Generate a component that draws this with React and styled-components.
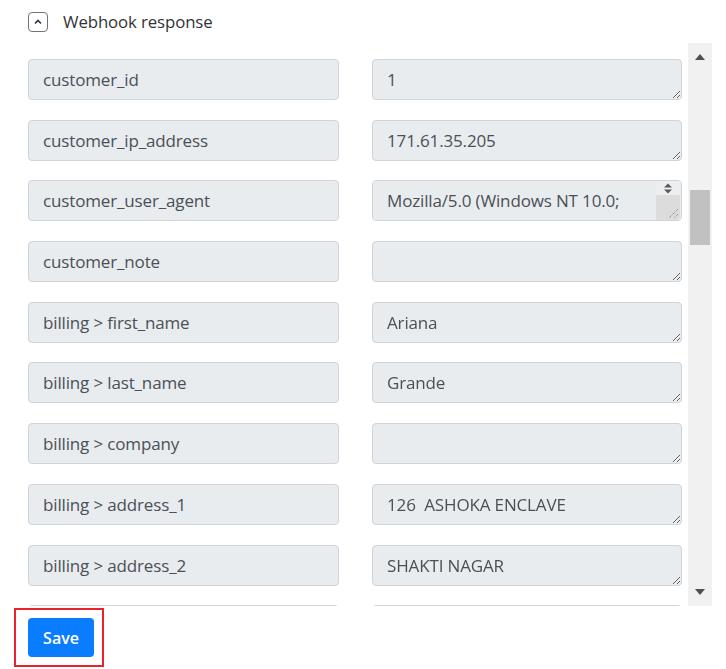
import React from 'react'
import styled, { createGlobalStyle } from 'styled-components'

const GlobalStyle = createGlobalStyle`
  html, body {
    margin: 0;
    padding: 0;
    background: #fff;
    font-family: "Open Sans", "Noto Sans", sans-serif;
  }
`

const Page = styled.div`
  width: 726px;
  height: 669px;
  display: flex;
  flex-direction: column;
  overflow: hidden;
`

const Header = styled.div`
  height: 43px;
  display: flex;
  align-items: center;
  gap: 15px;
  padding-left: 28px;
  box-sizing: border-box;
`

const Toggle = styled.button`
  width: 20px;
  height: 20px;
  padding: 0;
  border: 1px solid #6c757d;
  border-radius: 4px;
  background: #fff;
  display: flex;
  align-items: center;
  justify-content: center;
  margin-top: 1px;
`

const Title = styled.span`
  font-size: 16.8px;
  color: #333;
  letter-spacing: -0.1px;
`

const Body = styled.div`
  height: 563px;
  display: flex;
`

const List = styled.div`
  flex: 1;
  overflow: hidden;
  padding: 16px 0 0 28px;
  display: flex;
  flex-direction: column;
  gap: 19.7px;
  box-sizing: border-box;
`

const Row = styled.div`
  display: grid;
  grid-template-columns: 311px 310px;
  column-gap: 33px;
  flex-shrink: 0;
`

const fieldBase = `
  box-sizing: border-box;
  height: 41px;
  background: #e9ecef;
  border: 1px solid #ced4da;
  border-radius: 4px;
  color: #495057;
  font-family: "Open Sans", "Noto Sans", sans-serif;
  font-size: 17px;
  letter-spacing: -0.15px;
  padding: 0 14px;
`

const Key = styled.input`
  ${fieldBase}
  outline: none;
`

const ValueWrap = styled.div`
  position: relative;
  height: 41px;
`

const Value = styled.textarea`
  ${fieldBase}
  width: 100%;
  padding-top: 0;
  padding-bottom: 0;
  line-height: 39px;
  resize: vertical;
  outline: none;
  display: block;
`

const InnerScroll = styled.div`
  position: absolute;
  top: 1px;
  right: 2px;
  bottom: 1px;
  width: 24px;
  display: flex;
  flex-direction: column;
  border-radius: 0 3px 3px 0;
  overflow: hidden;
`

const InnerButtons = styled.div`
  height: 14px;
  background: #eceef0;
  display: flex;
  align-items: center;
  justify-content: center;
`

const InnerThumb = styled.div`
  flex: 1;
  background: #dcdcdc;
  display: flex;
  align-items: flex-end;
  justify-content: flex-end;
`

const Scrollbar = styled.div`
  width: 24px;
  margin-right: 14px;
  background: #f1f1f1;
  display: flex;
  flex-direction: column;
  align-items: center;
`

const Arrow = styled.div`
  height: 28px;
  display: flex;
  align-items: center;
  justify-content: center;
`

const Track = styled.div`
  flex: 1;
  width: 100%;
  padding-top: 119px;
  box-sizing: border-box;
  display: flex;
  justify-content: center;
`

const Thumb = styled.div`
  width: 20px;
  height: 55px;
  background: #c1c1c1;
`

const Footer = styled.div`
  padding: 2px 0 0 14px;
`

const Highlight = styled.div`
  display: inline-block;
  border: 2px solid #e8232b;
  padding: 8px 8px 8px 12px;
`

const SaveButton = styled.button`
  width: 66px;
  height: 39px;
  background: #0a7cff;
  color: #fff;
  border: none;
  border-radius: 4px;
  font-family: "Open Sans", "Noto Sans", sans-serif;
  font-size: 16px;
  font-weight: 600;
  display: block;
`

const fields = [
  ['customer_id', '1'],
  ['customer_ip_address', '171.61.35.205'],
  ['customer_user_agent', 'Mozilla/5.0 (Windows NT 10.0; Win64; x64) AppleWebKit/537.36 (KHTML, like Gecko) Chrome/91.0.4472.124 Safari/537.36', true],
  ['customer_note', ''],
  ['billing > first_name', 'Ariana'],
  ['billing > last_name', 'Grande'],
  ['billing > company', ''],
  ['billing > address_1', '126  ASHOKA ENCLAVE'],
  ['billing > address_2', 'SHAKTI NAGAR'],
  ['billing > city', 'Delhi'],
]

function App() {
  return (
    <Page>
      <GlobalStyle />
      <Header>
        <Toggle>
          <svg width="10" height="10" viewBox="0 0 10 10">
            <path d="M2 6.5 L5 3.5 L8 6.5" fill="none" stroke="#333" strokeWidth="1.6" />
          </svg>
        </Toggle>
        <Title>Webhook response</Title>
      </Header>
      <Body>
        <List>
          {fields.map(([k, v, overflow]) => (
            <Row key={k}>
              <Key readOnly value={k} />
              <ValueWrap>
                <Value readOnly value={v} />
                {overflow && (
                  <InnerScroll>
                    <InnerButtons>
                      <svg width="10" height="11" viewBox="0 0 10 11">
                        <path d="M1 4.5 L5 0.5 L9 4.5 Z M1 6.5 L5 10.5 L9 6.5 Z" fill="#5a5a5a" />
                      </svg>
                    </InnerButtons>
                    <InnerThumb>
                      <svg width="14" height="14" viewBox="0 0 14 14">
                        <path d="M12 3 L3 12 M12 8 L8 12" stroke="#777" strokeWidth="1" strokeDasharray="1 1" />
                      </svg>
                    </InnerThumb>
                  </InnerScroll>
                )}
              </ValueWrap>
            </Row>
          ))}
        </List>
        <Scrollbar>
          <Arrow>
            <svg width="10" height="6" viewBox="0 0 10 6"><path d="M0 6 L5 0 L10 6 Z" fill="#505050" /></svg>
          </Arrow>
          <Track>
            <Thumb />
          </Track>
          <Arrow>
            <svg width="10" height="6" viewBox="0 0 10 6"><path d="M0 0 L5 6 L10 0 Z" fill="#505050" /></svg>
          </Arrow>
        </Scrollbar>
      </Body>
      <Footer>
        <Highlight>
          <SaveButton>Save</SaveButton>
        </Highlight>
      </Footer>
    </Page>
  )
}

export default App
